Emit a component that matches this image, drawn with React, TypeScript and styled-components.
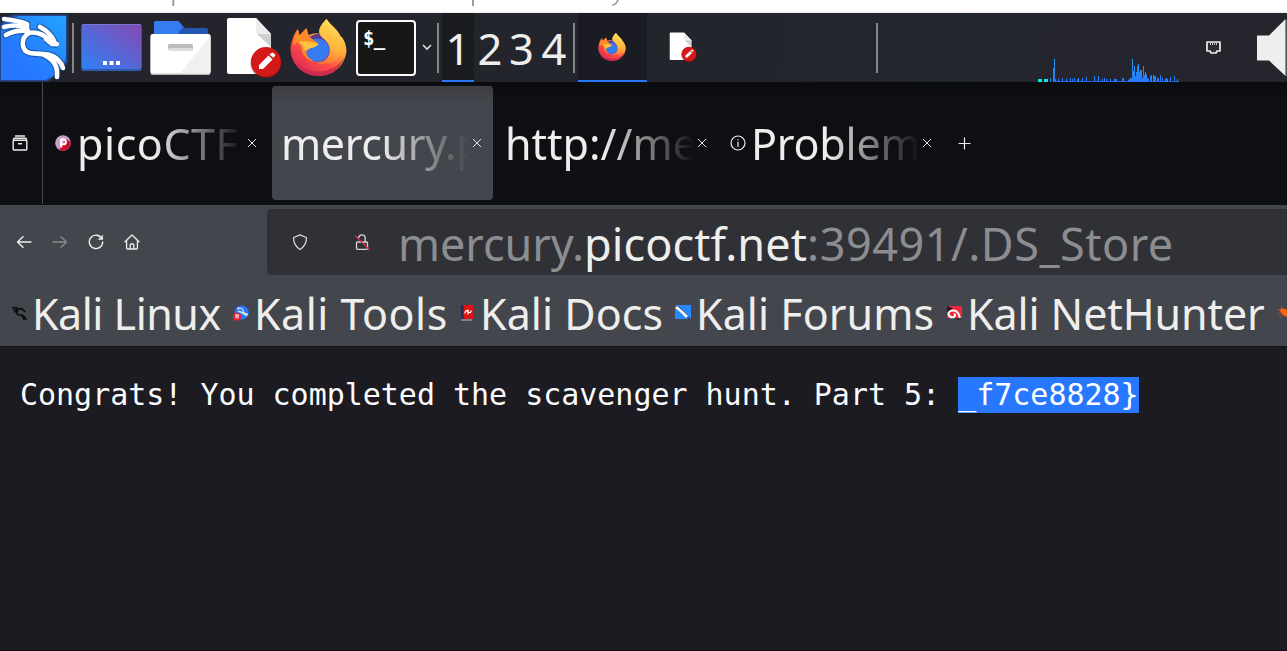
import React from 'react';
import styled, { createGlobalStyle } from 'styled-components';

const Global = createGlobalStyle`
  html, body { margin: 0; background: #1c1b21; overflow: hidden; }
  * { box-sizing: border-box; }
  svg { display: block; flex: none; }
`;

const ui = `'Noto Sans', 'Open Sans', sans-serif`;

const Screen = styled.div`
  width: 1287px;
  height: 651px;
  display: flex;
  flex-direction: column;
  overflow: hidden;
  background: #1c1b21;
  font-family: ${ui};
  color: #eeeeec;
`;

const HostStrip = styled.div`
  height: 13px;
  flex: none;
  background: #fff;
  border-bottom: 1px solid #efefef;
`;

const Panel = styled.header`
  height: 69px;
  flex: none;
  display: flex;
  align-items: center;
  background: linear-gradient(100deg, #23242c 0%, #23252c 60%, #22262e 74%, #25252d 84%);
  box-shadow: inset 0 -1px #22232b;
`;

const Launcher = styled.div<{ $w: number; $gap?: number }>`
  width: ${p => p.$w}px;
  height: 69px;
  margin-left: ${p => p.$gap ?? 0}px;
  flex: none;
  display: flex;
  align-items: center;
  justify-content: center;
`;

const Separator = styled.i<{ $gap: number }>`
  width: 2px;
  height: 50px;
  margin-left: ${p => p.$gap}px;
  flex: none;
  background: #85868a;
`;

const Workspace = styled.div<{ $active?: boolean; $w: number }>`
  width: ${p => p.$w}px;
  height: 69px;
  flex: none;
  text-align: center;
  font-size: 43.5px;
  line-height: 70px;
  background: ${p => (p.$active ? '#1a1c20' : 'transparent')};
  border-bottom: 2px solid ${p => (p.$active ? '#2777ff' : 'transparent')};
`;

const Task = styled.div<{ $active?: boolean; $w: number }>`
  width: ${p => p.$w}px;
  height: 69px;
  flex: none;
  display: flex;
  align-items: center;
  justify-content: center;
  padding: 1px 2px 0 0;
  background: ${p => (p.$active ? '#1b1c23' : 'transparent')};
  border-bottom: 2px solid ${p => (p.$active ? '#2777ff' : 'transparent')};
`;

const TabStrip = styled.nav`
  height: 123px;
  flex: none;
  display: flex;
  align-items: center;
  padding-bottom: 1px;
  background: linear-gradient(#0b0c0f, #0e0f13 14px);
`;

const TabManager = styled.div`
  width: 43px;
  height: 122px;
  align-self: flex-start;
  flex: none;
  display: flex;
  align-items: center;
  padding-left: 12px;
  border-right: 1px solid #48494d;
`;

const Tab = styled.div<{ $active?: boolean; $gap: number; $pad: number }>`
  width: 221px;
  height: 114px;
  margin-left: ${p => p.$gap}px;
  padding: 0 11px 0 ${p => p.$pad}px;
  flex: none;
  display: flex;
  align-items: center;
  border-radius: 4px;
  background: ${p => (p.$active ? 'linear-gradient(#3e3f43, #44464d 18px)' : 'transparent')};
`;

const TabTitle = styled.span<{ $spacing: number; $gap?: number }>`
  flex: 1;
  min-width: 0;
  height: 114px;
  margin-left: ${p => p.$gap ?? 0}px;
  margin-right: 3px;
  overflow: hidden;
  white-space: nowrap;
  font-size: 43px;
  line-height: 115px;
  letter-spacing: ${p => p.$spacing}px;
  mask-image: linear-gradient(to left, transparent 0, #000 90px);
`;

const NavBar = styled.div`
  height: 70px;
  flex: none;
  display: flex;
  align-items: center;
  padding-top: 4px;
  background: #44464d;
`;

const NavButtons = styled.div`
  width: 267px;
  display: flex;
  gap: 20px;
  padding-left: 16px;
`;

const UrlBar = styled.div`
  flex: 1;
  height: 66px;
  display: flex;
  align-items: center;
  padding-left: 25px;
  background: #303136;
  border-radius: 4px 0 0 4px;
`;

const Url = styled.span`
  margin-left: 28px;
  padding-top: 3px;
  font-size: 45px;
  line-height: 66px;
  white-space: nowrap;
  color: #8c8d90;
`;

const UrlPart = styled.span<{ $spacing: number; $host?: boolean }>`
  letter-spacing: ${p => p.$spacing}px;
  color: ${p => (p.$host ? '#eeeeec' : 'inherit')};
`;

const Bookmarks = styled.div`
  height: 72px;
  flex: none;
  display: flex;
  align-items: center;
  padding: 7px 0 0 11px;
  background: #44464d;
  border-bottom: 1px solid #101114;
`;

const Bookmark = styled.div<{ $w: number; $spacing?: number }>`
  width: ${p => p.$w}px;
  flex: none;
  display: flex;
  align-items: center;
  gap: 5px;
  font-size: 43px;
  line-height: 66px;
  letter-spacing: ${p => p.$spacing ?? 0}px;
  white-space: nowrap;
  svg { margin-top: -3px; }
`;

const Page = styled.pre`
  flex: 1;
  margin: 0;
  padding: 30px 20px 0;
  background: #1c1b21;
  border-bottom: 1px solid #101014;
  font: 30px/36px 'DejaVu Sans Mono', monospace;
  letter-spacing: -0.02px;
  color: #fbfbfe;
`;

const Selection = styled.span`
  display: inline-block;
  height: 36px;
  background: #2777ff;
  color: #fff;
`;

const HostText = () => (
  <svg width="1287" height="6" viewBox="0 0 1287 6">
    <path d="M173.3 0v6M473 0v6" stroke="#9a9ca4" strokeWidth="2" />
    <path d="M618 0q-2 5-6 5" fill="none" stroke="#9a9ca4" strokeWidth="1.6" />
  </svg>
);

const dragon = (
  <>
    <path d="M5 5C14 6 21 7 28 10V18M5 13C13 11 21 11 27 14M7 21C14 17 22 16 29 17" />
    <path d="M28 19C38 17 45 20 51 27L57 30M30 19C21 24 22 37 31 39C41 41 52 38 59 46Q63 50 64 54M45 41C55 46 59 52 58 63M41 13Q51 18 55 27" />
    <path d="M47 25L58 30L53 30Z" />
  </>
);

const KaliLogo = () => (
  <svg width="70" height="68" viewBox="0 0 70 68">
    <defs>
      <linearGradient id="kali" x1="0" y1="1" x2="1" y2="0">
        <stop offset=".3" stopColor="#2777ff" /><stop offset="1" stopColor="#22a2ff" />
      </linearGradient>
      <filter id="glow" x="-.1" y="-.1" width="1.2" height="1.2"><feGaussianBlur stdDeviation="1.5" /></filter>
    </defs>
    <path d="M1 10L14 1H68V49L49 67H1Z" fill="#2777ff" opacity=".7" filter="url(#glow)" />
    <path d="M2 12Q8 6 20 2H67V42Q64 60 46 66H2Z" fill="url(#kali)" />
    <g fill="none" stroke="#102c58" strokeWidth="7" strokeLinecap="round" opacity=".45">{dragon}</g>
    <g fill="none" stroke="#fff" strokeWidth="4.600" strokeLinecap="round" strokeLinejoin="round">{dragon}</g>
  </svg>
);

const DesktopIcon = () => (
  <svg width="61" height="69" viewBox="0 0 61 69">
    <defs>
      <linearGradient id="desk" x1="0" y1="1" x2="1" y2="0">
        <stop offset=".1" stopColor="#367bf0" /><stop offset="1" stopColor="#8649b2" />
      </linearGradient>
    </defs>
    <rect x=".5" y="11" width="60" height="47" rx="2" fill="#2c5cb0" />
    <rect x=".5" y="11" width="60" height="45" rx="2" fill="url(#desk)" />
    <path d="M1.5 11.5h58" stroke="#7786d0" opacity=".7" />
    <path d="M22 48h4v4h-4zM28.500 48h4v4h-4zM35 48h4v4h-4z" fill="#fff" />
  </svg>
);

const FilesIcon = () => (
  <svg width="61" height="69" viewBox="0 0 61 69">
    <path d="M4 10q0-2 2-2h23l6 7h21q2 0 2 2v8H4z" fill="#2457b0" />
    <path d="M4 10q0-2 2-2h22l5 6-4 5v4H4z" fill="#367bf0" />
    <rect x=".5" y="22" width="60" height="40" rx="2" fill="#b8b8b8" />
    <rect x=".5" y="21" width="60" height="39.500" rx="2" fill="#fff" />
    <path d="M60.500 23v35.500q0 2-2 2H30z" fill="#f0f0f0" />
    <rect x="18" y="31" width="25" height="7" rx="2" fill="#dedede" />
    <path d="M18 36v-3q0-2 2-2h21q2 0 2 2v3l-2-1H20z" fill="#bcbcbc" />
  </svg>
);

const EditorIcon = ({ w = 56, h = 61 }: { w?: number; h?: number }) => (
  <svg width={w} height={h} viewBox="0 0 56 61">
    <path d="M3 1h27l15 16v40H3q-2 0-2-2V3q0-2 2-2z" fill="#fff" />
    <path d="M30 1l15 16H32q-2 0-2-2z" fill="#ececec" />
    <path d="M31 17h14v13z" fill="#cfcfcf" />
    <circle cx="40" cy="46" r="15.500" fill="#8f1010" opacity=".5" />
    <circle cx="40" cy="45" r="15" fill="#d41919" />
    <path d="M33 52v-4l9.500-9.500 4 4L37 52zM43.500 37.500l2-1.500q1.500-.7 2.500.5l.8.800q1 1-.2 2.200l-1.300 1.300z" fill="#fff" />
  </svg>
);

const FirefoxIcon = ({ size, id }: { size: number; id: string }) => (
  <svg width={size} height={size} viewBox="0 0 56 57">
    <defs>
      <linearGradient id={`${id}a`} x1=".85" y1=".1" x2=".2" y2=".95">
        <stop offset=".05" stopColor="#ffdc4a" /><stop offset=".35" stopColor="#ffa23a" />
        <stop offset=".62" stopColor="#ff4f45" /><stop offset="1" stopColor="#e02958" />
      </linearGradient>
      <linearGradient id={`${id}b`} x1=".7" y1="0" x2=".4" y2="1">
        <stop offset="0" stopColor="#ffe45a" /><stop offset=".6" stopColor="#ffb33c" /><stop offset="1" stopColor="#ff7139" />
      </linearGradient>
    </defs>
    <path d="M36 0C41 7 47 10 50 17C53 19 56 26 56 32C54 48 42 57 28 57C13 57 1 46 0 31C0 23 3 16 7 10L9 16L16 9L18 16Q25 13 29 15C28 9 32 4 36 0Z" fill={`url(#${id}a)`} />
    <path d="M6 43C17 57 43 56 54 38C49 52 38 57 28 57C18 57 10 51 6 43Z" fill="#c0264f" opacity=".75" />
    <circle cx="28" cy="29" r="14" fill="#5a3a91" />
    <circle cx="27" cy="31" r="11.500" fill="#367bf0" />
    <path d="M36 0C40 7 48 11 50 19C54 28 50 39 42 43C35 46 30 46 26 43C35 44 40 37 39 29C38 24 36 22 31 18C25 10 33 4 36 0Z" fill={`url(#${id}b)`} />
    <path d="M8 11L9 17L16 10L18 17C22 21 26 22 28 25C27 28 20 28 16 32C15 36 19 40 24 43C16 42 10 34 11 27Q8 26 7 23L3 27Q2 17 8 11Z" fill="#ff8a2a" />
    <path d="M8 23Q17 21 28 25Q26 28 20 29Q16 30 16 32Q12 30 12 26Z" fill="#ffc33e" />
  </svg>
);

const TerminalFrame = styled.div`
  width: 60px;
  height: 56px;
  padding: 3px 0 0 5px;
  background: #171717;
  border: 2px solid #fdfafd;
  border-radius: 4px;
  font: 700 19px/26px 'DejaVu Sans Mono', monospace;
  letter-spacing: -0.6px;
  color: #fff;
`;

const CpuGraph = () => {
  const bars = [[12, 4], [15, 14], [16, 23], [17, 3], [18, 1], [20, 3], [21, 1], [24, 4], [26, 1], [28, 3], [29, 1], [32, 4], [34, 3], [36, 4], [39, 3], [40, 4], [42, 1], [44, 4], [46, 1], [48, 5], [50, 1], [52, 1], [56, 6], [58, 1], [60, 6], [62, 1], [64, 3], [66, 4], [68, 3], [70, 1], [72, 3], [74, 1], [76, 3], [77, 3], [78, 3], [80, 1], [84, 4], [85, 4], [87, 1], [90, 2], [91, 3], [92, 4], [93, 4], [94, 23], [95, 11], [96, 16], [97, 6], [98, 10], [99, 16], [100, 18], [101, 10], [102, 12], [103, 12], [104, 4], [105, 16], [106, 7], [107, 10], [108, 8], [109, 4], [110, 3], [112, 6], [113, 7], [115, 7], [116, 6], [117, 6], [119, 4], [120, 4], [122, 7], [124, 4], [126, 1], [127, 3], [128, 4], [129, 3], [132, 5], [136, 6], [138, 1], [139, 3]];
  return (
    <svg width="141" height="23" viewBox="0 0 141 23">
      <defs>
        <linearGradient id="cpu" gradientUnits="userSpaceOnUse" x1="0" y1="0" x2="0" y2="23">
          <stop offset="0" stopColor="#259ff0" /><stop offset="1" stopColor="#2777ff" />
        </linearGradient>
      </defs>
      <path d="M0 20h4v3H0zM6 20h4v3H6z" fill="#0be8dc" />
      <path d="M15 22h126v1H15z" fill="#2777ff" opacity=".65" />
      {bars.map(([x, h]) => <rect key={x} x={x} y={23 - h} width="1" height={h} fill="url(#cpu)" />)}
    </svg>
  );
};

const GraphSlot = styled.div`
  margin-left: 160px;
  align-self: flex-end;
`;

const NetIcon = () => (
  <svg width="15" height="13" viewBox="0 0 15 13">
    <path d="M1 1h13v9h-3l-1 2H5l-1-2H1z" fill="#2b2c33" stroke="#eeeeec" strokeWidth="1.700" strokeLinejoin="round" />
    <path d="M4.500 2v2M6.500 2v2M8.500 2v2M10.500 2v2" stroke="#c8c8c8" />
  </svg>
);

const SpeakerIcon = () => (
  <svg width="30" height="58" viewBox="0 0 30 58">
    <path d="M0 16.500h12L28.500 0v57L12 41.500H0z" fill="#eeeeec" />
    <path d="M29 1v56" stroke="#888a8e" />
  </svg>
);

const Line = ({ size = 16, children, color = '#eeeeec', width = 1.2 }: { size?: number; children: React.ReactNode; color?: string; width?: number }) => (
  <svg width={size} height={size} viewBox="0 0 16 16" fill="none" stroke={color} strokeWidth={width} strokeLinecap="round" strokeLinejoin="round">{children}</svg>
);

const CloseIcon = () => (
  <svg width="10" height="10" viewBox="0 0 10 10"><path d="M1 1l8 8M9 1l-8 8" stroke="#e2e2e1" strokeWidth="1" /></svg>
);

const PicoIcon = () => (
  <svg width="16" height="16" viewBox="0 0 16 16">
    <circle cx="8" cy="8" r="7.800" fill="#c9a0cc" />
    <path d="M15.700 7A7.800 7.800 0 0 1 5 15.200V12L11.500 4z" fill="#c8102e" />
    <path d="M6.200 12.500V4.500h2.300a2.400 2.400 0 0 1 0 4.800H5" fill="none" stroke="#fff" strokeWidth="2" />
  </svg>
);

const miniDragon = 'M1 2.500Q6 2 7 4Q12 3 14 7M2 5Q5 4 7 5Q4 9 8 10Q13 9 15 15M3 7L6 6M10 10Q13 12 13 15M10 3L12 5';

const Icon16 = ({ children }: { children: React.ReactNode }) => <svg width="16" height="16" viewBox="0 0 16 16">{children}</svg>;

export default function App() {
  return (
    <Screen>
      <Global />
      <HostStrip><HostText /></HostStrip>
      <Panel>
        <Launcher $w={68}><KaliLogo /></Launcher>
        <Separator $gap={4} />
        <Launcher $w={61} $gap={7}><DesktopIcon /></Launcher>
        <Launcher $w={61} $gap={8}><FilesIcon /></Launcher>
        <Launcher $w={56} $gap={15}><EditorIcon /></Launcher>
        <Launcher $w={57} $gap={8}><FirefoxIcon size={57} id="ffl" /></Launcher>
        <Launcher $w={60} $gap={9}><TerminalFrame>$_</TerminalFrame></Launcher>
        <Launcher $w={10} $gap={6}>
          <svg width="10" height="7" viewBox="0 0 10 7"><path d="M1 1l4 4 4-4" fill="none" stroke="#dededd" strokeWidth="1.600" /></svg>
        </Launcher>
        <Separator $gap={5} />
        <Launcher $w={3} />
        <Workspace $active $w={32}>1</Workspace>
        <Workspace $w={32}>2</Workspace>
        <Workspace $w={31}>3</Workspace>
        <Workspace $w={34}>4</Workspace>
        <Separator $gap={2} />
        <Launcher $w={3} />
        <Task $active $w={69}><FirefoxIcon size={28} id="fft" /></Task>
        <Task $w={73}><EditorIcon w={28} h={30} /></Task>
        <Separator $gap={156} />
        <GraphSlot><CpuGraph /></GraphSlot>
        <Launcher $w={15} $gap={27}><NetIcon /></Launcher>
        <Launcher $w={30} $gap={36}><SpeakerIcon /></Launcher>
      </Panel>

      <TabStrip>
        <TabManager>
          <Line width={1.4}><path d="M3.500 1h9M1.500 4.200q0-1 1-1h11q1 0 1 1M2 5.200h12q.8 0 .8.800v8q0 1-1 1H2.200q-1 0-1-1V6q0-.8.800-.8zM6.500 8.700h3" /></Line>
        </TabManager>
        <Tab $gap={4} $pad={8}>
          <PicoIcon /><TabTitle $spacing={0.55} $gap={6}>picoCTF</TabTitle><CloseIcon />
        </Tab>
        <Tab $active $gap={4} $pad={9}>
          <TabTitle $spacing={-0.35}>mercury.p</TabTitle><CloseIcon />
        </Tab>
        <Tab $gap={4} $pad={8}>
          <TabTitle $spacing={0}>http://me</TabTitle><CloseIcon />
        </Tab>
        <Tab $gap={4} $pad={8}>
          <Line><circle cx="8" cy="8" r="7" /><path d="M8 7v4.500M8 4.500v.3" /></Line>
          <TabTitle $spacing={-0.2} $gap={5}>Problem</TabTitle><CloseIcon />
        </Tab>
        <Launcher $w={14} $gap={14}>
          <svg width="13" height="13" viewBox="0 0 13 13"><path d="M.5 6.500h12M6.500.5v12" stroke="#eeeeec" strokeWidth="1.200" /></svg>
        </Launcher>
      </TabStrip>

      <NavBar>
        <NavButtons>
          <Line width={1.4}><path d="M15 8H1.500M7 2.800L1.500 8 7 13.200" /></Line>
          <Line width={1.4} color="#898a8d"><path d="M1 8h13.500M9 2.800L14.500 8 9 13.200" /></Line>
          <Line width={1.4}><path d="M13.800 4.500A6.700 6.700 0 1 0 14.700 8" /><path d="M14.700 1.200v4.300h-4.300z" fill="#eeeeec" strokeWidth=".5" /></Line>
          <Line width={1.3}><path d="M1 7.800L8 1l7 6.800M2.600 6.500v7.500q0 1 1 1h8.800q1 0 1-1V6.500M6.200 15v-4q0-1 1-1h1.600q1 0 1 1v4" /></Line>
        </NavButtons>
        <UrlBar>
          <Line width={1.3} color="#d8d8d7"><path d="M8 .8l6.300 2.700q.5 7.500-6.300 12Q1.200 11 1.700 3.500z" /></Line>
          <Launcher $w={16} $gap={46}>
            <Line width={1.3} color="#d8d8d7">
              <rect x="2.500" y="8" width="11" height="7.300" rx="1" /><path d="M4.500 4Q5 .8 8 .8q3.200 0 3.200 3.400V8" />
              <path d="M1.500 2l13.500 13.200" stroke="#e22850" />
            </Line>
          </Launcher>
          <Url>
            <UrlPart $spacing={-0.05}>mercury.</UrlPart>
            <UrlPart $spacing={0.1} $host>picoctf.net</UrlPart>
            <UrlPart $spacing={0.52}>:39491/.DS_Store</UrlPart>
          </Url>
        </UrlBar>
      </NavBar>

      <Bookmarks>
        <Bookmark $w={222} $spacing={-0.5}>
          <Icon16><path d={miniDragon} fill="none" stroke="#0b0b0d" strokeWidth="1.500" /></Icon16>Kali Linux
        </Bookmark>
        <Bookmark $w={226} $spacing={0.5}>
          <Icon16>
            <circle cx="8.700" cy="7.500" r="7" fill="#2777ff" /><path d="M4 3.500q6-1 6 2t5 4M5 6q4 1 9 5" fill="none" stroke="#cfe3ff" strokeWidth="1.300" />
            <circle cx="4" cy="11.700" r="4" fill="#e8202c" /><path d="M2 10h4M3.200 10v3.500M5 10v3.500" stroke="#fff" />
          </Icon16>Kali Tools
        </Bookmark>
        <Bookmark $w={216} $spacing={0.05}>
          <Icon16>
            <path d="M2 0h12v14H2z" fill="#dc1414" /><path d="M2 0h2.500v14H2z" fill="#24285e" /><path d="M2 15h11" stroke="#c9b9ba" />
            <path d="M12.300 5.500Q12 8 10 7.500T8 5.500Q6 5.500 6 8.500M9 4.500v5" fill="none" stroke="#fff" strokeWidth="1.200" />
          </Icon16>Kali Docs
        </Bookmark>
        <Bookmark $w={271} $spacing={0.05}>
          <Icon16>
            <path d="M0 0h16v14H0z" fill="#2788ff" /><path d="M0 1l4 1 6 6 5 6-5-3-5-5z" fill="#fff" stroke="#151a25" strokeWidth=".8" /><path d="M1 2l6 5 5 5" fill="none" stroke="#fff" strokeWidth="2.500" />
          </Icon16>Kali Forums
        </Bookmark>
        <Bookmark $w={331} $spacing={-0.1}>
          <Icon16>
            <path d="M2 1h14v12H4L1 13z" fill="#f3263d" /><path d="M1 1l6 2-6 5zM10 15l5-4v3z" fill="#22191f" />
            <path d="M14 13Q12 5 7 5.500Q2 6 2.500 9.500Q4 13 8 12Q10 10 8 9" fill="none" stroke="#fff" strokeWidth="2" />
          </Icon16>Kali NetHunter
        </Bookmark>
        <Bookmark $w={16}>
          <Icon16><path d="M2 5l3-2 6 2 5 1v7l-6-1-5-3z" fill="#ff6410" /><path d="M0 5h4M1 9l4-2M3 12l4-2M4 1l2 3" stroke="#ad4b20" /></Icon16>
        </Bookmark>
      </Bookmarks>

      <Page>Congrats! You completed the scavenger hunt. Part 5: <Selection>_f7ce8828{'}'}</Selection></Page>
    </Screen>
  );
}
